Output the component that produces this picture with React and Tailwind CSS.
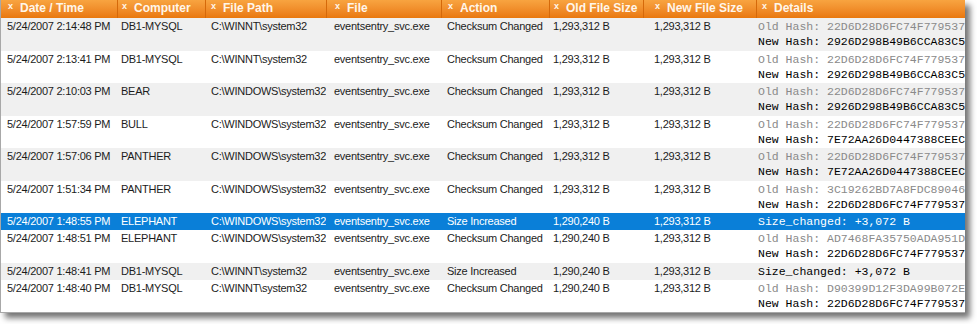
import React from 'react';

const COLS = 'grid grid-cols-[116px_88px_121px_115px_108px_94px_113px_210px]';

const HEADERS = [
  { label: 'Date / Time', pad: 'pl-[7px]' },
  { label: 'Computer', pad: 'pl-[4px]' },
  { label: 'File Path', pad: 'pl-[5px]' },
  { label: 'File', pad: 'pl-[8px]' },
  { label: 'Action', pad: 'pl-[6px]' },
  { label: 'Old File Size', pad: 'pl-[4px]' },
  { label: 'New File Size', pad: 'pl-[11px]' },
  { label: 'Details', pad: 'pl-[5px]' },
];

const CELL_PAD = ['pl-[6px]', 'pl-[4px]', 'pl-[6px]', 'pl-[8px]', 'pl-[6px]', 'pl-[4px]', 'pl-[11px]', 'pl-[2px]'];

const WINNT = 'C:\\WINNT\\system32';
const WINDOWS = 'C:\\WINDOWS\\system32';
const EXE = 'eventsentry_svc.exe';
const H22 = '22D6D28D6FC74F7795375A1E';

const ROWS = [
  { t: '5/24/2007 2:14:48 PM', c: 'DB1-MYSQL', p: WINNT, a: 'Checksum Changed', o: '1,293,312 B', n: '1,293,312 B', old: H22, nw: '2926D298B49B6CCA83C5B7F0', bg: 'grey' },
  { t: '5/24/2007 2:13:41 PM', c: 'DB1-MYSQL', p: WINNT, a: 'Checksum Changed', o: '1,293,312 B', n: '1,293,312 B', old: H22, nw: '2926D298B49B6CCA83C5B7F0', bg: 'white' },
  { t: '5/24/2007 2:10:03 PM', c: 'BEAR', p: WINDOWS, a: 'Checksum Changed', o: '1,293,312 B', n: '1,293,312 B', old: H22, nw: '2926D298B49B6CCA83C5B7F0', bg: 'grey' },
  { t: '5/24/2007 1:57:59 PM', c: 'BULL', p: WINDOWS, a: 'Checksum Changed', o: '1,293,312 B', n: '1,293,312 B', old: H22, nw: '7E72AA26D0447388CEEC41A9', bg: 'white' },
  { t: '5/24/2007 1:57:06 PM', c: 'PANTHER', p: WINDOWS, a: 'Checksum Changed', o: '1,293,312 B', n: '1,293,312 B', old: H22, nw: '7E72AA26D0447388CEEC41A9', bg: 'grey' },
  { t: '5/24/2007 1:51:34 PM', c: 'PANTHER', p: WINDOWS, a: 'Checksum Changed', o: '1,293,312 B', n: '1,293,312 B', old: '3C19262BD7A8FDC89046E2D1', nw: H22, bg: 'white' },
  { t: '5/24/2007 1:48:55 PM', c: 'ELEPHANT', p: WINDOWS, a: 'Size Increased', o: '1,290,240 B', n: '1,293,312 B', size: '+3,072 B', bg: 'sel' },
  { t: '5/24/2007 1:48:51 PM', c: 'ELEPHANT', p: WINDOWS, a: 'Checksum Changed', o: '1,290,240 B', n: '1,293,312 B', old: 'AD7468FA35750ADA951D0C3B', nw: H22, bg: 'white' },
  { t: '5/24/2007 1:48:41 PM', c: 'DB1-MYSQL', p: WINNT, a: 'Size Increased', o: '1,290,240 B', n: '1,293,312 B', size: '+3,072 B', bg: 'grey' },
  { t: '5/24/2007 1:48:40 PM', c: 'DB1-MYSQL', p: WINNT, a: 'Checksum Changed', o: '1,290,240 B', n: '1,293,312 B', old: 'D90399D12F3DA99B072E8C55', nw: H22, bg: 'white' },
];

const BG = { grey: 'bg-[#f0f0f0] text-[#1c1c1c]', white: 'bg-white text-[#1c1c1c]', sel: 'bg-[#0a7fd8] text-white' };

function Details({ row }) {
  const sel = row.bg === 'sel';
  if (row.size) {
    return <div className={sel ? 'text-white' : 'text-black'}>Size_changed: {row.size}</div>;
  }
  return (
    <>
      <div className="text-[#8a8a8a]">Old Hash: {row.old}</div>
      <div className="text-black">New Hash: {row.nw}</div>
    </>
  );
}

function Row({ row }) {
  const tall = !row.size;
  const vals = [row.t, row.c, row.p, EXE, row.a, row.o, row.n];
  return (
    <div className={`${COLS} ${BG[row.bg]} ${tall ? 'h-[32.5px]' : 'h-[17px]'} pt-[1px]`}>
      {vals.map((v, i) => (
        <div key={i} className={`${CELL_PAD[i]} whitespace-nowrap overflow-hidden leading-[15px] text-[11px] tracking-[-0.25px]`}>
          {v}
        </div>
      ))}
      <div className={`${CELL_PAD[7]} whitespace-nowrap overflow-hidden leading-[15px] text-[11.5px] font-['Liberation_Mono',monospace]`}>
        <Details row={row} />
      </div>
    </div>
  );
}

export default function App() {
  return (
    <div className="w-[977px] h-[324px] bg-white font-['Liberation_Sans',Arial,sans-serif]">
      <div className="w-[965px] overflow-hidden bg-white border-l border-b border-[#a8a8a8] shadow-[5px_5px_6px_rgba(0,0,0,0.55)]">
        <div className={`${COLS} h-[18px] bg-gradient-to-b from-[#f8a440] to-[#e9780c]`}>
          {HEADERS.map((h, i) => (
            <div
              key={h.label}
              className={`${h.pad} flex items-start whitespace-nowrap text-[#fff6ea] ${i > 0 ? 'border-l border-[#d5690a]' : ''}`}
            >
              <span className="text-[9px] font-bold leading-[9px] mt-[2px]">x</span>
              <span className="ml-[7px] text-[12px] font-bold leading-[17px]">{h.label}</span>
            </div>
          ))}
        </div>
        {ROWS.map((r, i) => (
          <Row key={i} row={r} />
        ))}
      </div>
    </div>
  );
}
